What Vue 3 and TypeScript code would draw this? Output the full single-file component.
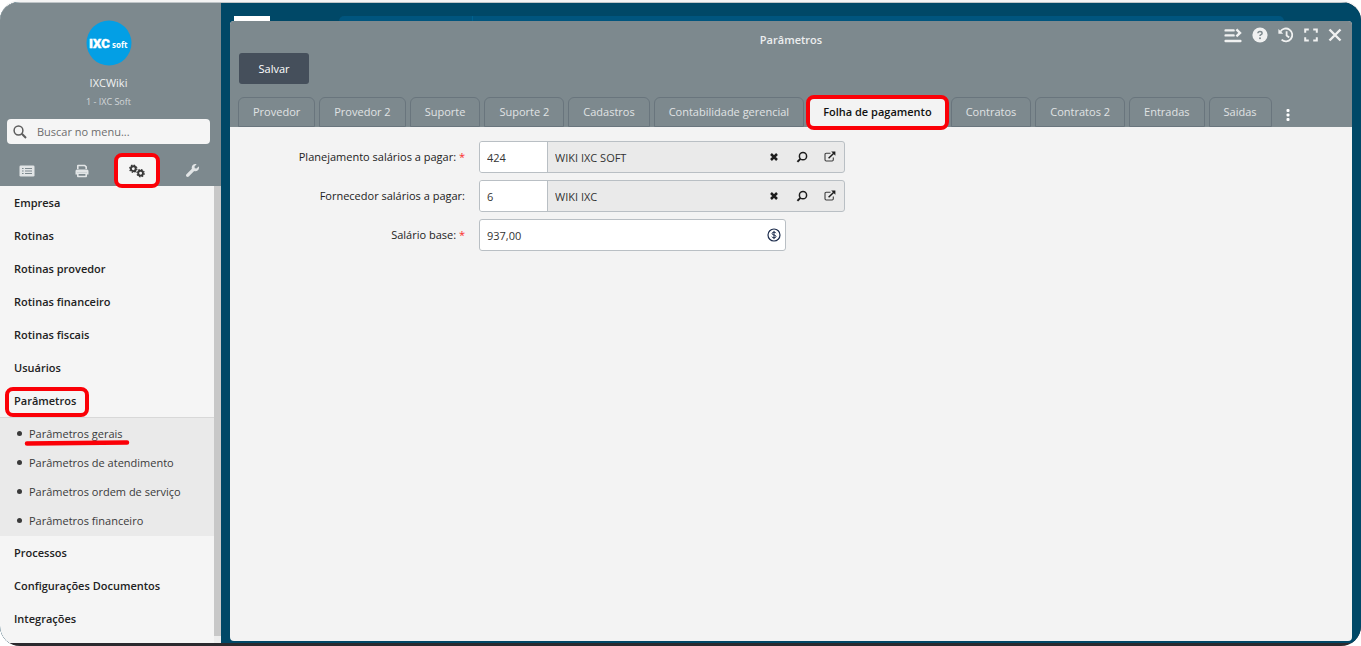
<script setup lang="ts">
import { ref } from 'vue'

interface MenuEntry {
  label: string
  marked?: boolean
  children?: string[]
}

const menu: MenuEntry[] = [
  { label: 'Empresa' },
  { label: 'Rotinas' },
  { label: 'Rotinas provedor' },
  { label: 'Rotinas financeiro' },
  { label: 'Rotinas fiscais' },
  { label: 'Usuários' },
  {
    label: 'Parâmetros',
    marked: true,
    children: [
      'Parâmetros gerais',
      'Parâmetros de atendimento',
      'Parâmetros ordem de serviço',
      'Parâmetros financeiro',
    ],
  },
  { label: 'Processos' },
  { label: 'Configurações Documentos' },
  { label: 'Integrações' },
]

const tabs: string[] = [
  'Provedor',
  'Provedor 2',
  'Suporte',
  'Suporte 2',
  'Cadastros',
  'Contabilidade gerencial',
  'Folha de pagamento',
  'Contratos',
  'Contratos 2',
  'Entradas',
  'Saidas',
]
const activeTab = ref('Folha de pagamento')

const lookups = ref([
  { id: 'planejamento', label: 'Planejamento salários a pagar:', required: true, code: '424', name: 'WIKI IXC SOFT' },
  { id: 'fornecedor', label: 'Fornecedor salários a pagar:', required: false, code: '6', name: 'WIKI IXC' },
])
const salario = ref('937,00')
const search = ref('')
</script>

<template>
  <div class="screen">
    <div class="desktop">
      <aside class="sidebar">
        <header class="profile">
          <svg class="logo" viewBox="0 0 46 46" role="img" aria-label="IXC soft">
            <circle cx="23" cy="23" r="22.5" fill="#039fe5" />
            <text x="3" y="28" class="logo-main">IXC</text>
            <text x="26" y="28" class="logo-sub">soft</text>
          </svg>
          <strong class="user">IXCWiki</strong>
          <span class="company">1 - IXC Soft</span>
          <label class="search">
            <svg viewBox="0 0 14 14" width="14" height="14" fill="none" stroke="#5d5d5d">
              <circle cx="5.5" cy="5.5" r="4.4" stroke-width="1.5" />
              <path d="M8.8 8.8 13 13" stroke-width="2" />
            </svg>
            <input v-model="search" type="text" placeholder="Buscar no menu..." aria-label="Buscar no menu" />
          </label>
          <nav class="modules">
            <button type="button" aria-label="Cadastros">
              <svg viewBox="0 0 16 12" width="16" height="12">
                <rect x="0.5" y="0.5" width="15" height="11" rx="1.3" fill="#e2e5e6" />
                <path d="M3 3.5h1.6M3 6h1.6M3 8.5h1.6M6 3.5h7M6 6h7M6 8.5h7" stroke="#7e8a8f" stroke-width="1.2" />
              </svg>
            </button>
            <button type="button" aria-label="Impressões">
              <svg viewBox="0 0 14 14" width="14" height="14" fill="#e2e5e6">
                <path d="M2 5V1.8Q2 .8 3 .8h7l2 1.8V5h-1.6V3.2L9.4 2.3H3.6V5z" />
                <path d="M2 5.5h10q1.5 0 1.5 1.5v3.5H12V8.7H2v1.8H.5V7Q.5 5.5 2 5.5z" />
                <path fill-rule="evenodd" d="M2 8.7h10v3.6q0 .9-.9.9H2.9q-.9 0-.9-.9zM3.6 10v1.8h6.8V10z" />
              </svg>
            </button>
            <button type="button" class="current" aria-label="Configurações">
              <svg viewBox="0 0 16 14" width="16" height="14" fill="none" stroke="#3a3a3a">
                <circle cx="4.3" cy="4.7" r="2.4" stroke-width="1.9" />
                <circle cx="4.3" cy="4.7" r="3.6" stroke-width="1.3" stroke-dasharray="1.5 1.327" />
                <circle cx="11.6" cy="9.2" r="2.4" stroke-width="1.9" />
                <circle cx="11.6" cy="9.2" r="3.6" stroke-width="1.3" stroke-dasharray="1.5 1.327" />
              </svg>
            </button>
            <button type="button" aria-label="Ferramentas">
              <svg viewBox="0 0 512 512" width="13" height="13" fill="#e2e5e6">
                <path d="M507.73 109.1c-2.24-9.03-13.54-12.09-20.12-5.51l-74.36 74.36-67.88-11.31-11.31-67.88 74.36-74.36c6.62-6.62 3.43-17.9-5.66-20.16-47.38-11.74-99.55.91-136.58 37.93-39.64 39.64-50.55 97.1-34.05 147.2L18.74 402.76c-24.99 24.99-24.99 65.51 0 90.5 24.99 24.99 65.51 24.99 90.5 0l213.21-213.21c50.12 16.71 107.47 5.68 147.37-34.22 37.07-37.07 49.7-89.32 37.91-136.73z" />
              </svg>
            </button>
          </nav>
        </header>

        <div class="menu-area">
          <ul class="menu">
            <li v-for="entry in menu" :key="entry.label">
              <a href="#" class="menu-link" :class="{ marked: entry.marked }">{{ entry.label }}</a>
              <ul v-if="entry.children" class="submenu">
                <li v-for="(child, i) in entry.children" :key="child">
                  <a href="#">{{ child }}</a>
                  <svg v-if="i === 0" class="stroke-mark" viewBox="0 0 106 6" width="106" height="6">
                    <path d="M3 3.5 103 2.5" stroke="#fb0007" stroke-width="4.5" stroke-linecap="round" />
                  </svg>
                </li>
              </ul>
            </li>
          </ul>
          <div class="scrollbar"><div class="thumb"></div></div>
        </div>
      </aside>

      <main class="workspace">
        <div class="backdrop">
          <span class="back-logo"></span>
          <span class="back-bar"><span></span></span>
        </div>
        <section class="window">
          <header class="window-head">
            <div class="title-row">
              <h1>Parâmetros</h1>
              <div class="window-tools">
                <button type="button" aria-label="Expandir lista">
                  <svg viewBox="0 0 18 15" width="18" height="15" fill="none" stroke="#f0f1f1" stroke-width="2.4" stroke-linecap="round">
                    <path d="M1.6 2.4h8M1.6 7.4h8M1.6 13h14.8" />
                    <path d="m12.4 1.4 3.6 3.5-3.6 3.5" stroke-linecap="butt" />
                  </svg>
                </button>
                <button type="button" aria-label="Ajuda">
                  <svg viewBox="0 0 16 16" width="16" height="16">
                    <circle cx="8" cy="8" r="7.6" fill="#f0f1f1" />
                    <path d="M5.9 6.3Q6 4.5 8 4.5q2.1 0 2.1 1.7 0 .9-1.1 1.5-1 .5-1 1.3" fill="none" stroke="#7e8a8f" stroke-width="1.5" />
                    <circle cx="8" cy="11.2" r="1" fill="#7e8a8f" />
                  </svg>
                </button>
                <button type="button" aria-label="Histórico">
                  <svg viewBox="0 0 16 16" width="16" height="16" fill="none" stroke="#f0f1f1" stroke-width="1.8">
                    <path d="M2.4 4.6A6.4 6.4 0 1 1 3.6 12.7" />
                    <path d="M.4 2v4.7h4.8z" fill="#f0f1f1" stroke="none" />
                    <path d="M8.6 4.3v4.2l2.6 2" />
                  </svg>
                </button>
                <button type="button" aria-label="Tela cheia">
                  <svg viewBox="0 0 14 14" width="14" height="14" fill="none" stroke="#f0f1f1" stroke-width="2">
                    <path d="M1.2 4.8V1.4h3.6M9.2 1.4h3.6v3.4M12.8 9.2v3.4H9.2M4.8 12.6H1.2V9.2" />
                  </svg>
                </button>
                <button type="button" aria-label="Fechar">
                  <svg viewBox="0 0 14 14" width="14" height="14" fill="none" stroke="#f0f1f1" stroke-width="2.4">
                    <path d="m1.5 1.5 11 11M12.5 1.5l-11 11" />
                  </svg>
                </button>
              </div>
            </div>
            <button type="button" class="save">Salvar</button>
            <nav class="tabs">
              <button
                v-for="tab in tabs"
                :key="tab"
                type="button"
                :class="{ active: tab === activeTab }"
                @click="activeTab = tab"
              >{{ tab }}</button>
              <button type="button" class="more" aria-label="Mais abas">
                <svg viewBox="0 0 4 12" width="4" height="12" fill="#fff">
                  <rect x="0.5" y="0" width="3" height="3" rx="1" />
                  <rect x="0.5" y="4.5" width="3" height="3" rx="1" />
                  <rect x="0.5" y="9" width="3" height="3" rx="1" />
                </svg>
              </button>
            </nav>
          </header>

          <form class="form" @submit.prevent>
            <div v-for="row in lookups" :key="row.id" class="row">
              <label :for="row.id">{{ row.label }}<span v-if="row.required" class="req"> *</span></label>
              <div class="lookup">
                <input :id="row.id" v-model="row.code" type="text" class="code" />
                <input v-model="row.name" type="text" class="name" readonly :aria-label="row.label" />
                <button type="button" aria-label="Limpar">
                  <svg viewBox="0 0 8 8" width="8" height="8" stroke="#1d1d1d" stroke-width="2.5">
                    <path d="m1 1 6 6M7 1 1 7" />
                  </svg>
                </button>
                <button type="button" aria-label="Pesquisar">
                  <svg viewBox="0 0 12 12" width="12" height="12" fill="none" stroke="#1d1d1d">
                    <circle cx="7" cy="5.2" r="3.6" stroke-width="1.5" />
                    <path d="M4.4 7.9 1.4 10.9" stroke-width="2" />
                  </svg>
                </button>
                <button type="button" aria-label="Abrir cadastro">
                  <svg viewBox="0 0 12 12" width="12" height="12" fill="none" stroke="#3c3c3c" stroke-width="1.1">
                    <path d="M6.5 2.3H2.2Q1 2.3 1 3.5v5.3q0 1.2 1.2 1.2h5.9q1.2 0 1.2-1.2V6.5" />
                    <path d="M4.6 7.2 9.8 2.2" stroke="#1d1d1d" stroke-width="1.5" />
                    <path d="M7.2.6h4.2v4.2z" fill="#1d1d1d" stroke="none" />
                  </svg>
                </button>
              </div>
            </div>
            <div class="row">
              <label for="salario">Salário base:<span class="req"> *</span></label>
              <div class="money">
                <input id="salario" v-model="salario" type="text" />
                <svg viewBox="0 0 14 14" width="14" height="14" fill="none" stroke="#1c2c4c">
                  <circle cx="7" cy="7" r="6" stroke-width="1.2" />
                  <path d="M9 5.2Q8.7 4.2 7 4.2q-1.9 0-1.9 1.3Q5.1 6.7 7 7q2 .3 2 1.5 0 1.3-2 1.3-1.8 0-2.1-1.1M7 2.9v8.2" stroke-width="1" />
                </svg>
              </div>
            </div>
          </form>
        </section>
      </main>
    </div>
  </div>
</template>

<style>
body {
  background: #fff;
}
</style>

<style scoped>
*,
*::before,
*::after {
  box-sizing: border-box;
}

.screen {
  height: 100vh;
  display: flex;
  flex-direction: column;
  padding-bottom: 3px;
  background: #2b2a2e;
  border-radius: 20px;
  overflow: hidden;
  border-top: 2px solid #f4f4f4;
  font: 11px/16px "Open Sans", "Noto Sans", sans-serif;
  color: #222;
}

button,
input {
  font: inherit;
  color: inherit;
  margin: 0;
  padding: 0;
  border: 0;
  background: none;
}

button {
  cursor: pointer;
}

input {
  min-width: 0;
  outline: none;
}

svg {
  display: block;
  flex: none;
}

ul {
  list-style: none;
  margin: 0;
  padding: 0;
}

a {
  color: inherit;
  text-decoration: none;
}

.desktop {
  flex: 1;
  min-height: 0;
  display: flex;
  background: #004867;
  border-top: 1px solid #bfc5c8;
}

.sidebar {
  flex: none;
  width: 221px;
  display: flex;
  flex-direction: column;
  background: #f5f5f5;
}

.profile {
  display: flex;
  flex-direction: column;
  align-items: center;
  height: 183px;
  padding: 17px 4px 0 0;
  background: #7d898e;
}

.logo {
  width: 46px;
  height: 46px;
}

.logo-main {
  font: 900 13px Roboto, sans-serif;
  fill: #fff;
  stroke: #fff;
  stroke-width: 0.4px;
}

.logo-sub {
  font: 700 8px "Open Sans", sans-serif;
  fill: #fff;
}

.user {
  margin-top: 9px;
  font-weight: 500;
  color: #f1f2f2;
}

.company {
  margin-top: 3px;
  font-size: 9px;
  color: #d3d7d9;
}

.search {
  flex: none;
  align-self: stretch;
  display: flex;
  align-items: center;
  gap: 10px;
  height: 25px;
  margin: 9px 7px 0;
  padding: 0 6px;
  background: #f5f5f5;
  border-radius: 4px;
}

.search input {
  flex: 1;
}

.search input::placeholder {
  color: #6d6d6d;
  opacity: 1;
}

.modules {
  flex: none;
  align-self: stretch;
  display: flex;
  justify-content: space-between;
  align-items: center;
  margin-top: 9px;
  padding: 0 2px 0 4px;
}

.modules button {
  width: 46px;
  height: 35px;
  display: flex;
  align-items: center;
  justify-content: center;
}

.modules .current {
  position: relative;
  z-index: 1;
  background: #f5f5f5;
  border: 4px solid #fb0007;
  border-radius: 8px;
}

.menu-area {
  flex: 1;
  min-height: 0;
  display: flex;
}

.menu {
  flex: 1;
  min-width: 0;
  overflow: hidden;
}

.menu-link {
  position: relative;
  display: block;
  padding: 0 14px;
  font-weight: 600;
  line-height: 33px;
}

.marked::after {
  content: "";
  position: absolute;
  left: 5px;
  top: 3px;
  width: 84px;
  height: 30px;
  border: 4px solid #fb0007;
  border-radius: 8px;
}

.submenu {
  padding: 1px 0;
  border-top: 1px solid #d8d8d8;
  background: #eaeaea;
  color: #3a3a3a;
}

.submenu li {
  position: relative;
  display: flex;
  align-items: center;
  gap: 7px;
  height: 29px;
  padding-left: 17px;
}

.submenu li::before {
  content: "";
  width: 5px;
  height: 5px;
  border-radius: 50%;
  background: #3a3a3a;
}

.stroke-mark {
  position: absolute;
  left: 24px;
  top: 21px;
}

.scrollbar {
  flex: none;
  width: 7px;
  padding-bottom: 7px;
  background: #ededed;
}

.thumb {
  height: 100%;
  background: #c8c8c8;
}

.workspace {
  flex: 1;
  min-width: 0;
  display: flex;
  flex-direction: column;
  padding: 13px 9px 2px;
}

.backdrop {
  flex: none;
  display: flex;
  justify-content: space-between;
  height: 5px;
  padding: 0 68px 0 4px;
}

.back-logo {
  width: 36px;
  background: #fff;
}

.back-bar {
  width: 90%;
  padding-left: 133px;
  background: #00557e;
  border-radius: 14px 14px 0 0;
}

.back-bar span {
  display: block;
  width: 1px;
  height: 5px;
  background: #00628f;
}

.window {
  flex: 1;
  min-height: 0;
  display: flex;
  flex-direction: column;
  background: #f3f3f3;
  border-radius: 4px;
  overflow: hidden;
}

.window-head {
  padding: 0 8px;
  background: #7d898e;
}

.title-row {
  display: grid;
  grid-template-columns: 1fr auto 1fr;
  height: 32px;
}

h1 {
  grid-column: 2;
  margin: 11px 0 0;
  font-size: 11px;
  line-height: 16px;
  font-weight: 600;
  color: #eceeee;
}

.window-tools {
  display: flex;
  justify-content: flex-end;
  align-items: center;
  gap: 10px;
  height: 28px;
  padding-right: 2px;
}

.save {
  display: block;
  min-width: 70px;
  height: 31px;
  margin-left: 1px;
  background: #454f5b;
  border-radius: 3px;
  color: #fff;
  font-weight: 500;
}

.tabs {
  display: flex;
  gap: 4px;
  height: 30px;
  margin-top: 13px;
}

.tabs button {
  position: relative;
  padding: 0 14px;
  border: 1px solid #69757d;
  border-radius: 6px 6px 0 0;
  color: #e0e3e4;
  white-space: nowrap;
}

.tabs .active {
  background: #f3f3f3;
  border-color: #f3f3f3;
  color: #111;
  font-weight: 600;
}

.tabs .active::after {
  content: "";
  position: absolute;
  inset: -3px -3px -4px;
  border: 4px solid #fb0007;
  border-radius: 8px;
}

.tabs .more {
  border: 0;
  padding: 6px 10px 0;
}

.form {
  display: flex;
  flex-direction: column;
  gap: 7px;
  padding: 14px 8px;
}

.row {
  display: grid;
  grid-template-columns: 227px 1fr;
  align-items: center;
  gap: 14px;
}

.row label {
  text-align: right;
  white-space: nowrap;
}

.req {
  color: #fb2a2a;
}

.lookup,
.money {
  display: flex;
  align-items: center;
  height: 32px;
  border: 1px solid #b9bfc4;
  border-radius: 3px;
  color: #333;
  overflow: hidden;
}

.lookup {
  max-width: 366px;
  background: #eaeaea;
}

.lookup input,
.money input {
  height: 100%;
  padding: 0 7px;
}

.lookup .code {
  width: 68px;
  background: #fff;
  border-right: 1px solid #b9bfc4;
}

.name {
  flex: 1;
}

.lookup button {
  width: 28px;
  height: 28px;
  display: flex;
  align-items: center;
  justify-content: center;
}

.money {
  max-width: 307px;
  padding-right: 4px;
  background: #fff;
}

.money input {
  flex: 1;
}
</style>
